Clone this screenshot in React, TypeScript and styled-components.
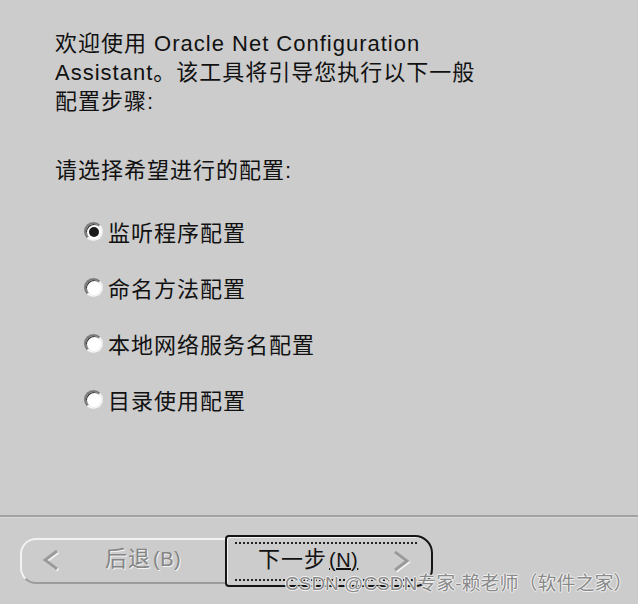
import React from 'react';
import styled, {createGlobalStyle} from 'styled-components';

const GlobalStyle = createGlobalStyle`
  html, body {
    margin: 0;
    padding: 0;
    background: #cccccc;
  }

  body {
    font-family: "Liberation Sans", "Noto Sans CJK SC", sans-serif;
    color: #111;
  }
`;

const options = ['监听程序配置', '命名方法配置', '本地网络服务名配置', '目录使用配置'];

const Chevron = ({dir}: {dir: 'left' | 'right'}) => {
    const pts = dir === 'left' ? '16,3 4,12 16,21' : '4,3 16,12 4,21';

    return (
        <StyledChevron width="21" height="26" viewBox="0 0 21 26">
            <polyline points={pts} transform="translate(1.2 1.2)" fill="none" stroke="#f4f4f4" strokeWidth="3"/>
            <polyline points={pts} fill="none" stroke="#9a9a9a" strokeWidth="3"/>
        </StyledChevron>
    );
};

export default function App() {
    const selected = 0;

    return (
        <StyledWizard>
            <GlobalStyle/>
            <StyledContent>
                <StyledIntro>
                    欢迎使用 Oracle Net Configuration<br/>
                    Assistant。该工具将引导您执行以下一般<br/>
                    配置步骤:
                </StyledIntro>
                <StyledPrompt>请选择希望进行的配置:</StyledPrompt>
                <StyledOptionList>
                    {options.map((label, i) => (
                        <StyledOption key={label}>
                            <StyledRadio $checked={i === selected}/>
                            {label}
                        </StyledOption>
                    ))}
                </StyledOptionList>
            </StyledContent>
            <StyledSeparator/>
            <StyledButtonBar>
                <StyledBackButton type="button" disabled>
                    <Chevron dir="left"/>
                    <StyledLabel $disabled>后退<StyledKey>(B)</StyledKey></StyledLabel>
                </StyledBackButton>
                <StyledNextButton type="button">
                    <StyledFocus>
                        <StyledLabel>下一步<StyledKey><u>(N)</u></StyledKey></StyledLabel>
                        <Chevron dir="right"/>
                    </StyledFocus>
                </StyledNextButton>
            </StyledButtonBar>
            <StyledWatermark>CSDN @CSDN专家-赖老师（软件之家）</StyledWatermark>
        </StyledWizard>
    );
}

const StyledWizard = styled.div`
  position: relative;
  display: flex;
  flex-direction: column;
  width: 638px;
  height: 604px;
  overflow: hidden;
  background: #cccccc;
`;

const StyledContent = styled.div`
  height: 515px;
  padding: 29px 0 0 55px;
  box-sizing: border-box;
  font-size: 22px;
  letter-spacing: 1px;
`;

const StyledIntro = styled.p`
  margin: 0;
  line-height: 29px;
`;

const StyledPrompt = styled.p`
  margin: 40px 0 0;
  line-height: 29px;
`;

const StyledOptionList = styled.div`
  display: flex;
  flex-direction: column;
  margin-top: 18px;
  padding-left: 29px;
`;

const StyledOption = styled.label`
  display: flex;
  align-items: center;
  gap: 5px;
  height: 56px;
`;

const StyledRadio = styled.span<{$checked: boolean}>`
  position: relative;
  flex: none;
  width: 15px;
  height: 15px;
  border-radius: 50%;
  border: 2px solid;
  border-color: #7a7a7a #f2f2f2 #f2f2f2 #7a7a7a;
  background: #fff;
  box-shadow: inset 1px 1px 0 #3a3a3a;

  &::after {
    content: "";
    display: ${({$checked}) => ($checked ? 'block' : 'none')};
    position: absolute;
    left: 3px;
    top: 3px;
    width: 10px;
    height: 10px;
    border-radius: 50%;
    background: #1a1a1a;
  }
`;

const StyledSeparator = styled.div`
  height: 2px;
  background: #a2a2a2;
  border-bottom: 1px solid #d8d8d8;
`;

const StyledButtonBar = styled.div`
  display: flex;
  align-items: center;
  padding: 17px 0 0 20px;
  height: 52px;
`;

const StyledBackButton = styled.button`
  display: flex;
  align-items: center;
  width: 205px;
  height: 46px;
  padding: 0 0 0 19px;
  box-sizing: border-box;
  background: #cccccc;
  border: 2px solid #f2f2f2;
  border-right: none;
  border-bottom-color: #9c9c9c;
  border-radius: 16px 0 0 16px;
  font: inherit;
  gap: 43px;
`;

const StyledNextButton = styled.button`
  display: flex;
  width: 208px;
  height: 52px;
  padding: 5px 14px 4px 8px;
  box-sizing: border-box;
  background: #cccccc;
  border: 2px solid #151515;
  border-radius: 4px 18px 18px 4px;
  box-shadow: inset 1px 1px 0 #f2f2f2;
  font: inherit;
`;

const StyledFocus = styled.span`
  flex: 1;
  display: flex;
  align-items: center;
  justify-content: space-between;
  padding: 0 5px 0 23px;
  border-top: 2px dotted #222;
  border-bottom: 2px dotted #222;
`;

const StyledLabel = styled.span<{$disabled?: boolean}>`
  display: inline-flex;
  align-items: baseline;
  padding-bottom: 10px;
  font-size: 22px;
  letter-spacing: 1px;
  color: ${({$disabled}) => ($disabled ? '#858585' : '#111')};
  text-shadow: ${({$disabled}) => ($disabled ? '1px 1px 0 #f4f4f4' : 'none')};
`;

const StyledKey = styled.span`
  font-size: 20px;
  letter-spacing: 0.5px;
  margin-left: 2px;
`;

const StyledChevron = styled.svg`
  flex: none;
  display: block;
`;

const StyledWatermark = styled.div`
  position: absolute;
  left: 285px;
  top: 572px;
  font-size: 19px;
  line-height: 24px;
  color: #8a8a8a;
  white-space: nowrap;
  text-shadow: 1px 0 0 #f0f0f0, -1px 0 0 #f0f0f0, 0 1px 0 #f0f0f0, 0 -1px 0 #f0f0f0;
`;
